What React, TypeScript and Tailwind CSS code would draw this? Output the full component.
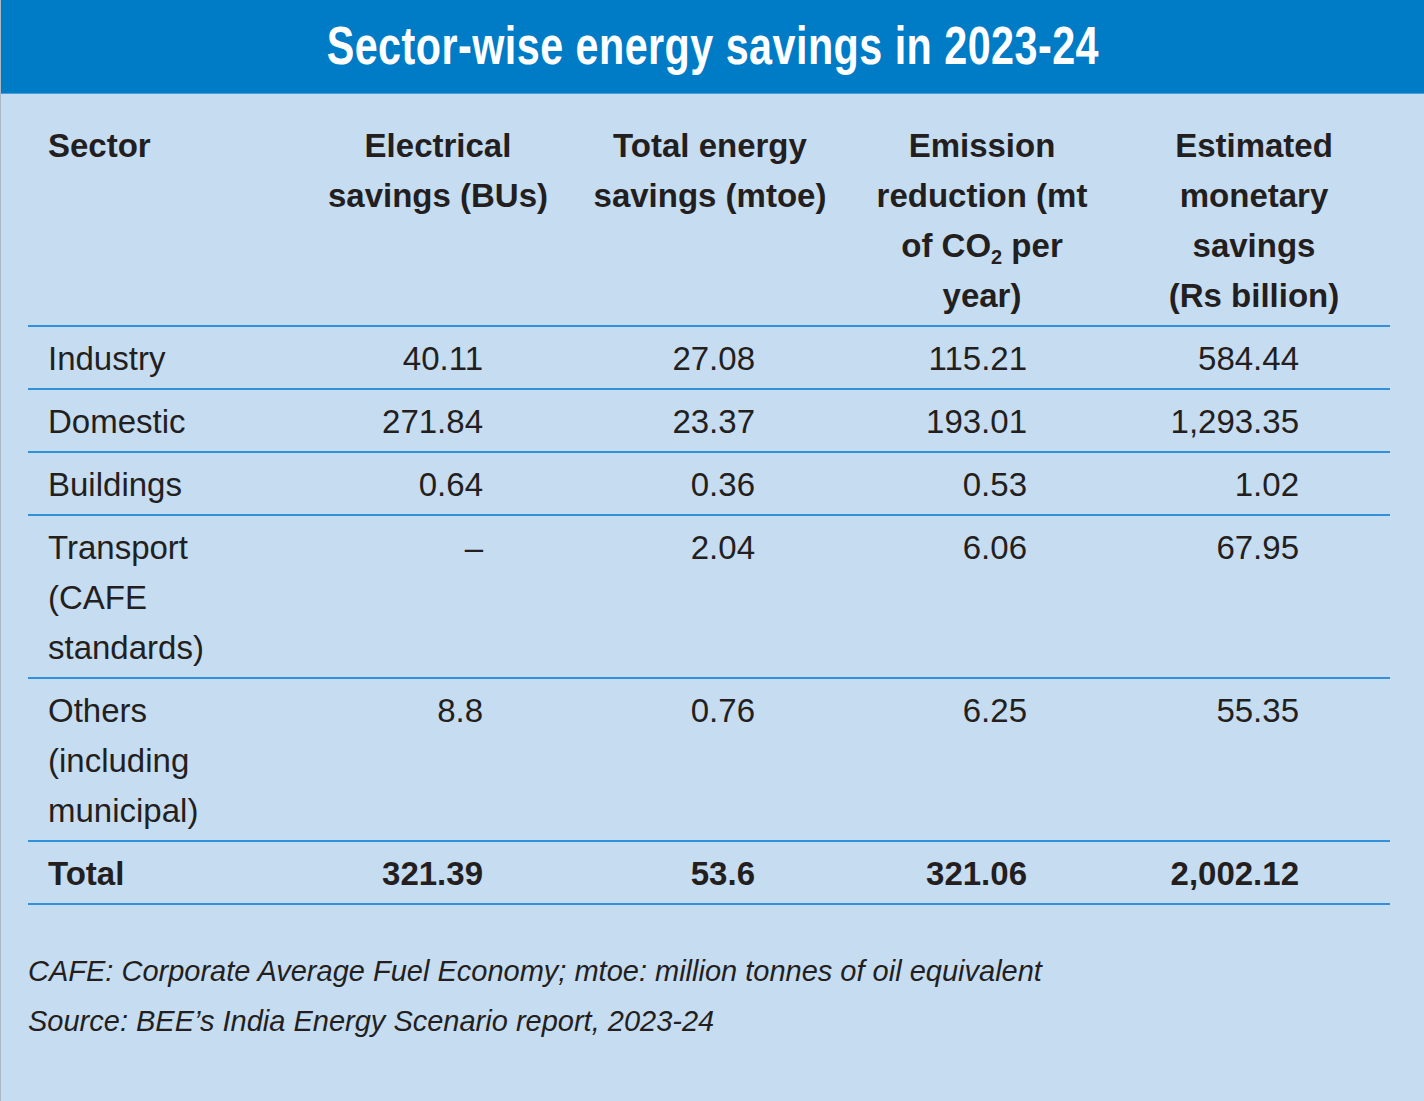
const rows = [
  { sector: ["Industry"], vals: ["40.11", "27.08", "115.21", "584.44"] },
  { sector: ["Domestic"], vals: ["271.84", "23.37", "193.01", "1,293.35"] },
  { sector: ["Buildings"], vals: ["0.64", "0.36", "0.53", "1.02"] },
  { sector: ["Transport", "(CAFE", "standards)"], vals: ["–", "2.04", "6.06", "67.95"] },
  { sector: ["Others", "(including", "municipal)"], vals: ["8.8", "0.76", "6.25", "55.35"] },
];

export default function App() {
  return (
    <div className="w-[1424px] h-[1101px] bg-[#c6dcf1] border-l border-[#aab8c6] text-[#231f20] font-['Liberation_Sans',Arial,sans-serif] overflow-hidden">
      <div className="h-[94px] bg-[#007cc7] border-b border-[#4b9bd8] flex items-center justify-center">
        <h1 className="text-white font-bold text-[54px] leading-none tracking-[0.6px] scale-x-[0.765] whitespace-nowrap pb-[4px]">
          Sector-wise energy savings in 2023-24
        </h1>
      </div>

      <div className="w-[1362px] ml-[27px] mt-[27px] text-[33px] leading-[50px]">
        {/* header */}
        <div className="grid grid-cols-[274px_272px_272px_272px_272px] font-bold border-b-2 border-[#3291d8] pb-[4px]">
          <div className="pl-[20px]">Sector</div>
          <div className="text-center">Electrical<br />savings (BUs)</div>
          <div className="text-center">Total energy<br />savings (mtoe)</div>
          <div className="text-center">
            Emission<br />reduction (mt<br />of CO<sub className="text-[20px] relative top-[7px] align-baseline">2</sub> per<br />year)
          </div>
          <div className="text-center">Estimated<br />monetary<br />savings<br />(Rs billion)</div>
        </div>

        {rows.map((r) => (
          <div
            key={r.sector[0]}
            className="grid grid-cols-[274px_272px_272px_272px_272px] border-b-2 border-[#3291d8] pt-[7px] pb-[4px]"
          >
            <div className="pl-[20px]">
              {r.sector.map((s) => (
                <div key={s}>{s}</div>
              ))}
            </div>
            {r.vals.map((v, i) => (
              <div key={i} className="text-right pr-[91px]">{v}</div>
            ))}
          </div>
        ))}

        <div className="grid grid-cols-[274px_272px_272px_272px_272px] border-b-2 border-[#3291d8] pt-[7px] pb-[4px] font-bold">
          <div className="pl-[20px]">Total</div>
          <div className="text-right pr-[91px]">321.39</div>
          <div className="text-right pr-[91px]">53.6</div>
          <div className="text-right pr-[91px]">321.06</div>
          <div className="text-right pr-[91px]">2,002.12</div>
        </div>
      </div>

      <div className="ml-[27px] mt-[41px] italic text-[29px] leading-[50px]">
        <p>CAFE: Corporate Average Fuel Economy; mtoe: million tonnes of oil equivalent</p>
        <p>Source: BEE’s India Energy Scenario report, 2023-24</p>
      </div>
    </div>
  );
}
